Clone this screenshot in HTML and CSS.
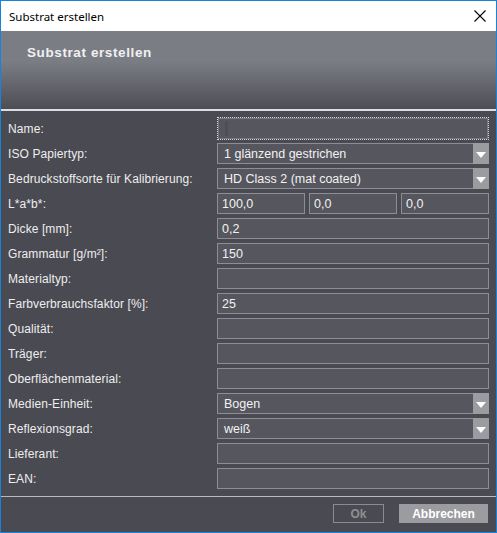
FILE: index.html
```html
<!DOCTYPE html>
<html lang="de">
<head>
<meta charset="utf-8">
<title>Substrat erstellen</title>
<link rel="stylesheet" href="styles.css">
</head>
<body>
<div class="window">
  <div class="titlebar">
    <span class="title">Substrat erstellen</span>
    <svg class="close" width="12" height="12" viewBox="0 0 12 12"><path d="M0.5 0.5 L11.5 11.5 M11.5 0.5 L0.5 11.5" stroke="#000" stroke-width="1.1" fill="none"/></svg>
  </div>
  <div class="banner"><h1>Substrat erstellen</h1></div>
  <div class="form">
    <label>Name:</label>
    <div class="focus"><div class="field"><span class="caret"></span></div></div>

    <label>ISO Papiertyp:</label>
    <div class="field select"><span class="val">1 glänzend gestrichen</span><span class="arrow"></span></div>

    <label>Bedruckstoffsorte für Kalibrierung:</label>
    <div class="field select"><span class="val">HD Class 2 (mat coated)</span><span class="arrow"></span></div>

    <label>L*a*b*:</label>
    <div class="triple">
      <div class="field small">100,0</div>
      <div class="field small">0,0</div>
      <div class="field small">0,0</div>
    </div>

    <label>Dicke [mm]:</label>
    <div class="field small">0,2</div>

    <label>Grammatur [g/m²]:</label>
    <div class="field small">150</div>

    <label>Materialtyp:</label>
    <div class="field"></div>

    <label>Farbverbrauchsfaktor [%]:</label>
    <div class="field small">25</div>

    <label>Qualität:</label>
    <div class="field"></div>

    <label>Träger:</label>
    <div class="field"></div>

    <label>Oberflächenmaterial:</label>
    <div class="field"></div>

    <label>Medien-Einheit:</label>
    <div class="field select"><span class="val">Bogen</span><span class="arrow"></span></div>

    <label>Reflexionsgrad:</label>
    <div class="field select"><span class="val">weiß</span><span class="arrow"></span></div>

    <label>Lieferant:</label>
    <div class="field"></div>

    <label>EAN:</label>
    <div class="field"></div>
  </div>
  <div class="footer">
    <button class="btn ok">Ok</button>
    <button class="btn cancel">Abbrechen</button>
  </div>
</div>
</body>
</html>
```
FILE: styles.css
```css
* { box-sizing: border-box; }
html, body { margin: 0; padding: 0; background: #ffffff; }
body { width: 497px; height: 533px; overflow: hidden; }

.window {
  width: 497px;
  height: 533px;
  border: 1px solid #1883d7;
  display: flex;
  flex-direction: column;
  background: #4a4a52;
  font-family: "Liberation Sans", Arial, sans-serif;
}

.titlebar {
  height: 30px;
  flex: none;
  background: #ffffff;
  display: flex;
  align-items: center;
  justify-content: space-between;
  padding: 0 10px 0 8px;
}
.title {
  font-family: "Noto Sans", "DejaVu Sans", sans-serif;
  font-size: 11.5px;
  color: #000;
}
.close { display: block; margin-right: 0; }

.banner {
  height: 80px;
  flex: none;
  background: linear-gradient(to bottom, #7b7d85 0px, #7b7d85 30px, #63646c 55px, #4d4d55 78px);
  border-bottom: 2px solid #dedee2;
  padding: 13px 0 0 26px;
}
.banner h1 {
  margin: 0;
  font-size: 13.5px;
  font-weight: bold;
  color: #f0f0f2;
  letter-spacing: 0.6px;
  line-height: 18px;
}

.form {
  flex: none;
  display: grid;
  grid-template-columns: 210px 272px;
  grid-auto-rows: 21px;
  row-gap: 4px;
  padding: 7px 0 7px 6px;
  border-bottom: 1px solid #b9b9bd;
}
.form label {
  font-size: 12px;
  letter-spacing: 0.1px;
  color: #eeeeee;
  display: flex;
  align-items: center;
  padding-left: 1px;
}

.field {
  height: 21px;
  background: #56565e;
  border: 1px solid #8d8d92;
  color: #f2f2f2;
  font-size: 12.5px;
  display: flex;
  align-items: center;
  padding-left: 6px;
  position: relative;
}
.field.small { padding-left: 4px; }

.focus {
  border: 1px dotted #d8d8d8;
  padding: 0;
  height: 23px;
  margin-top: -1px;
}
.focus .field { height: 21px; border-color: #77777c; }
.caret {
  width: 3px;
  height: 15px;
  background: #4e4e55;
}

.select { padding-right: 0; }
.select .val { flex: 1; }
.arrow {
  width: 16px;
  height: 21px;
  margin: -1px -1px -1px 0;
  background: #9b9ba0;
  display: flex;
  align-items: center;
  justify-content: center;
}
.arrow::after {
  content: "";
  width: 0;
  height: 0;
  border-left: 5px solid transparent;
  border-right: 5px solid transparent;
  border-top: 6px solid #ffffff;
  margin-top: 2px;
}

.triple {
  display: grid;
  grid-template-columns: 88px 88px 88px;
  column-gap: 4px;
}

.footer {
  flex: 1;
  display: flex;
  justify-content: flex-end;
  align-items: flex-start;
  padding: 7px 8px 0 0;
  gap: 15px;
}
.btn {
  height: 19px;
  font-family: "Liberation Sans", Arial, sans-serif;
  font-size: 12px;
  font-weight: bold;
  padding: 0;
  margin: 0;
}
.ok {
  width: 51px;
  background: transparent;
  border: 1px solid #8a8a8f;
  color: #8f8f94;
}
.cancel {
  width: 89px;
  background: #9b9ba0;
  border: none;
  color: #ffffff;
}
```
